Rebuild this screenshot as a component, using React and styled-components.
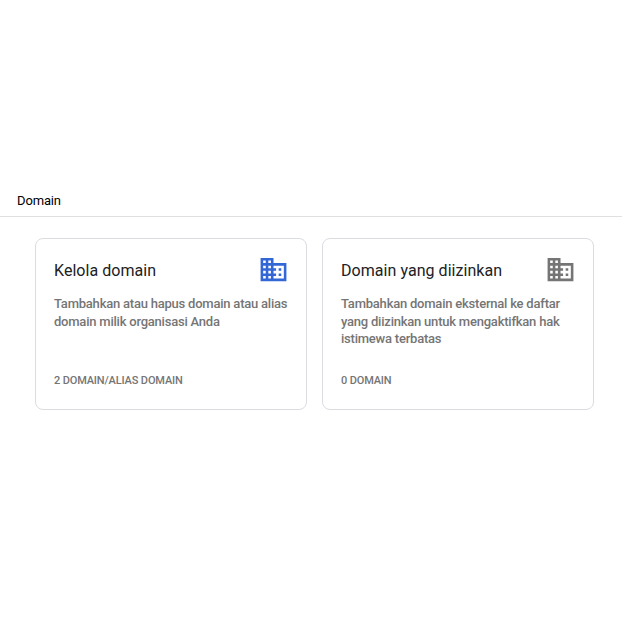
import React from "react";
import styled, { createGlobalStyle } from "styled-components";

const Global = createGlobalStyle`
  html, body { margin: 0; padding: 0; background: #fff; }
  body { font-family: Roboto, "Liberation Sans", sans-serif; }
`;
const Page = styled.div`
  width: 622px;
  height: 622px;
  padding-top: 184px;
  box-sizing: border-box;
  overflow: hidden;
`;
const Header = styled.header`
  height: 33px;
  box-sizing: border-box;
  padding: 8px 0 0 17px;
  border-bottom: 1px solid #e0e0e0;
  font-size: 13px;
  line-height: 17px;
  letter-spacing: -0.15px;
  color: #000;
`;
const Cards = styled.div`
  display: flex;
  gap: 15px;
  padding: 21px 0 0 35px;
`;
const Card = styled.section`
  width: 272px;
  height: 172px;
  box-sizing: border-box;
  border: 1px solid #dadce0;
  border-radius: 8px;
  padding: 18px 18px 0;
  display: flex;
  flex-direction: column;
`;
const CardTop = styled.div`
  display: flex;
  justify-content: space-between;
  align-items: flex-start;
  height: 28px;
`;
const Title = styled.h2`
  margin: 0;
  padding-top: 3px;
  font-size: 16px;
  line-height: 21px;
  font-weight: 400;
  letter-spacing: 0.05px;
  color: #202124;
`;
const Desc = styled.p`
  margin: 10px 0 0;
  height: 54px;
  font-size: 13px;
  line-height: 17.6px;
  font-weight: 500;
  letter-spacing: -0.22px;
  color: #757575;
`;
const Count = styled.div`
  margin-top: 24px;
  font-size: 11px;
  line-height: 16px;
  font-weight: 500;
  letter-spacing: -0.15px;
  color: #757575;
`;
const Icon = styled.svg`
  width: 31px;
  height: 31px;
  margin: -3px -1px 0 0;
  fill: ${(p) => p.$color};
  flex: none;
`;

const Building = ({ color }) => (
  <Icon $color={color} viewBox="0 0 24 24" aria-hidden="true">
    <path d="M12 7V3H2v18h20V7H12zM6 19H4v-2h2v2zm0-4H4v-2h2v2zm0-4H4V9h2v2zm0-4H4V5h2v2zm4 12H8v-2h2v2zm0-4H8v-2h2v2zm0-4H8V9h2v2zm0-4H8V5h2v2zm10 12h-8v-2h2v-2h-2v-2h2v-2h-2V9h8v10zm-2-8h-2v2h2v-2zm0 4h-2v2h2v-2z" />
  </Icon>
);

const data = [
  { title: "Kelola domain", color: "#3367d6", desc: "Tambahkan atau hapus domain atau alias domain milik organisasi Anda", count: "2 DOMAIN/ALIAS DOMAIN" },
  { title: "Domain yang diizinkan", color: "#757575", desc: "Tambahkan domain eksternal ke daftar yang diizinkan untuk mengaktifkan hak istimewa terbatas", count: "0 DOMAIN" },
];

export default function App() {
  return (
    <Page>
      <Global />
      <Header>Domain</Header>
      <Cards>
        {data.map((d) => (
          <Card key={d.title}>
            <CardTop>
              <Title>{d.title}</Title>
              <Building color={d.color} />
            </CardTop>
            <Desc>{d.desc}</Desc>
            <Count>{d.count}</Count>
          </Card>
        ))}
      </Cards>
    </Page>
  );
}
